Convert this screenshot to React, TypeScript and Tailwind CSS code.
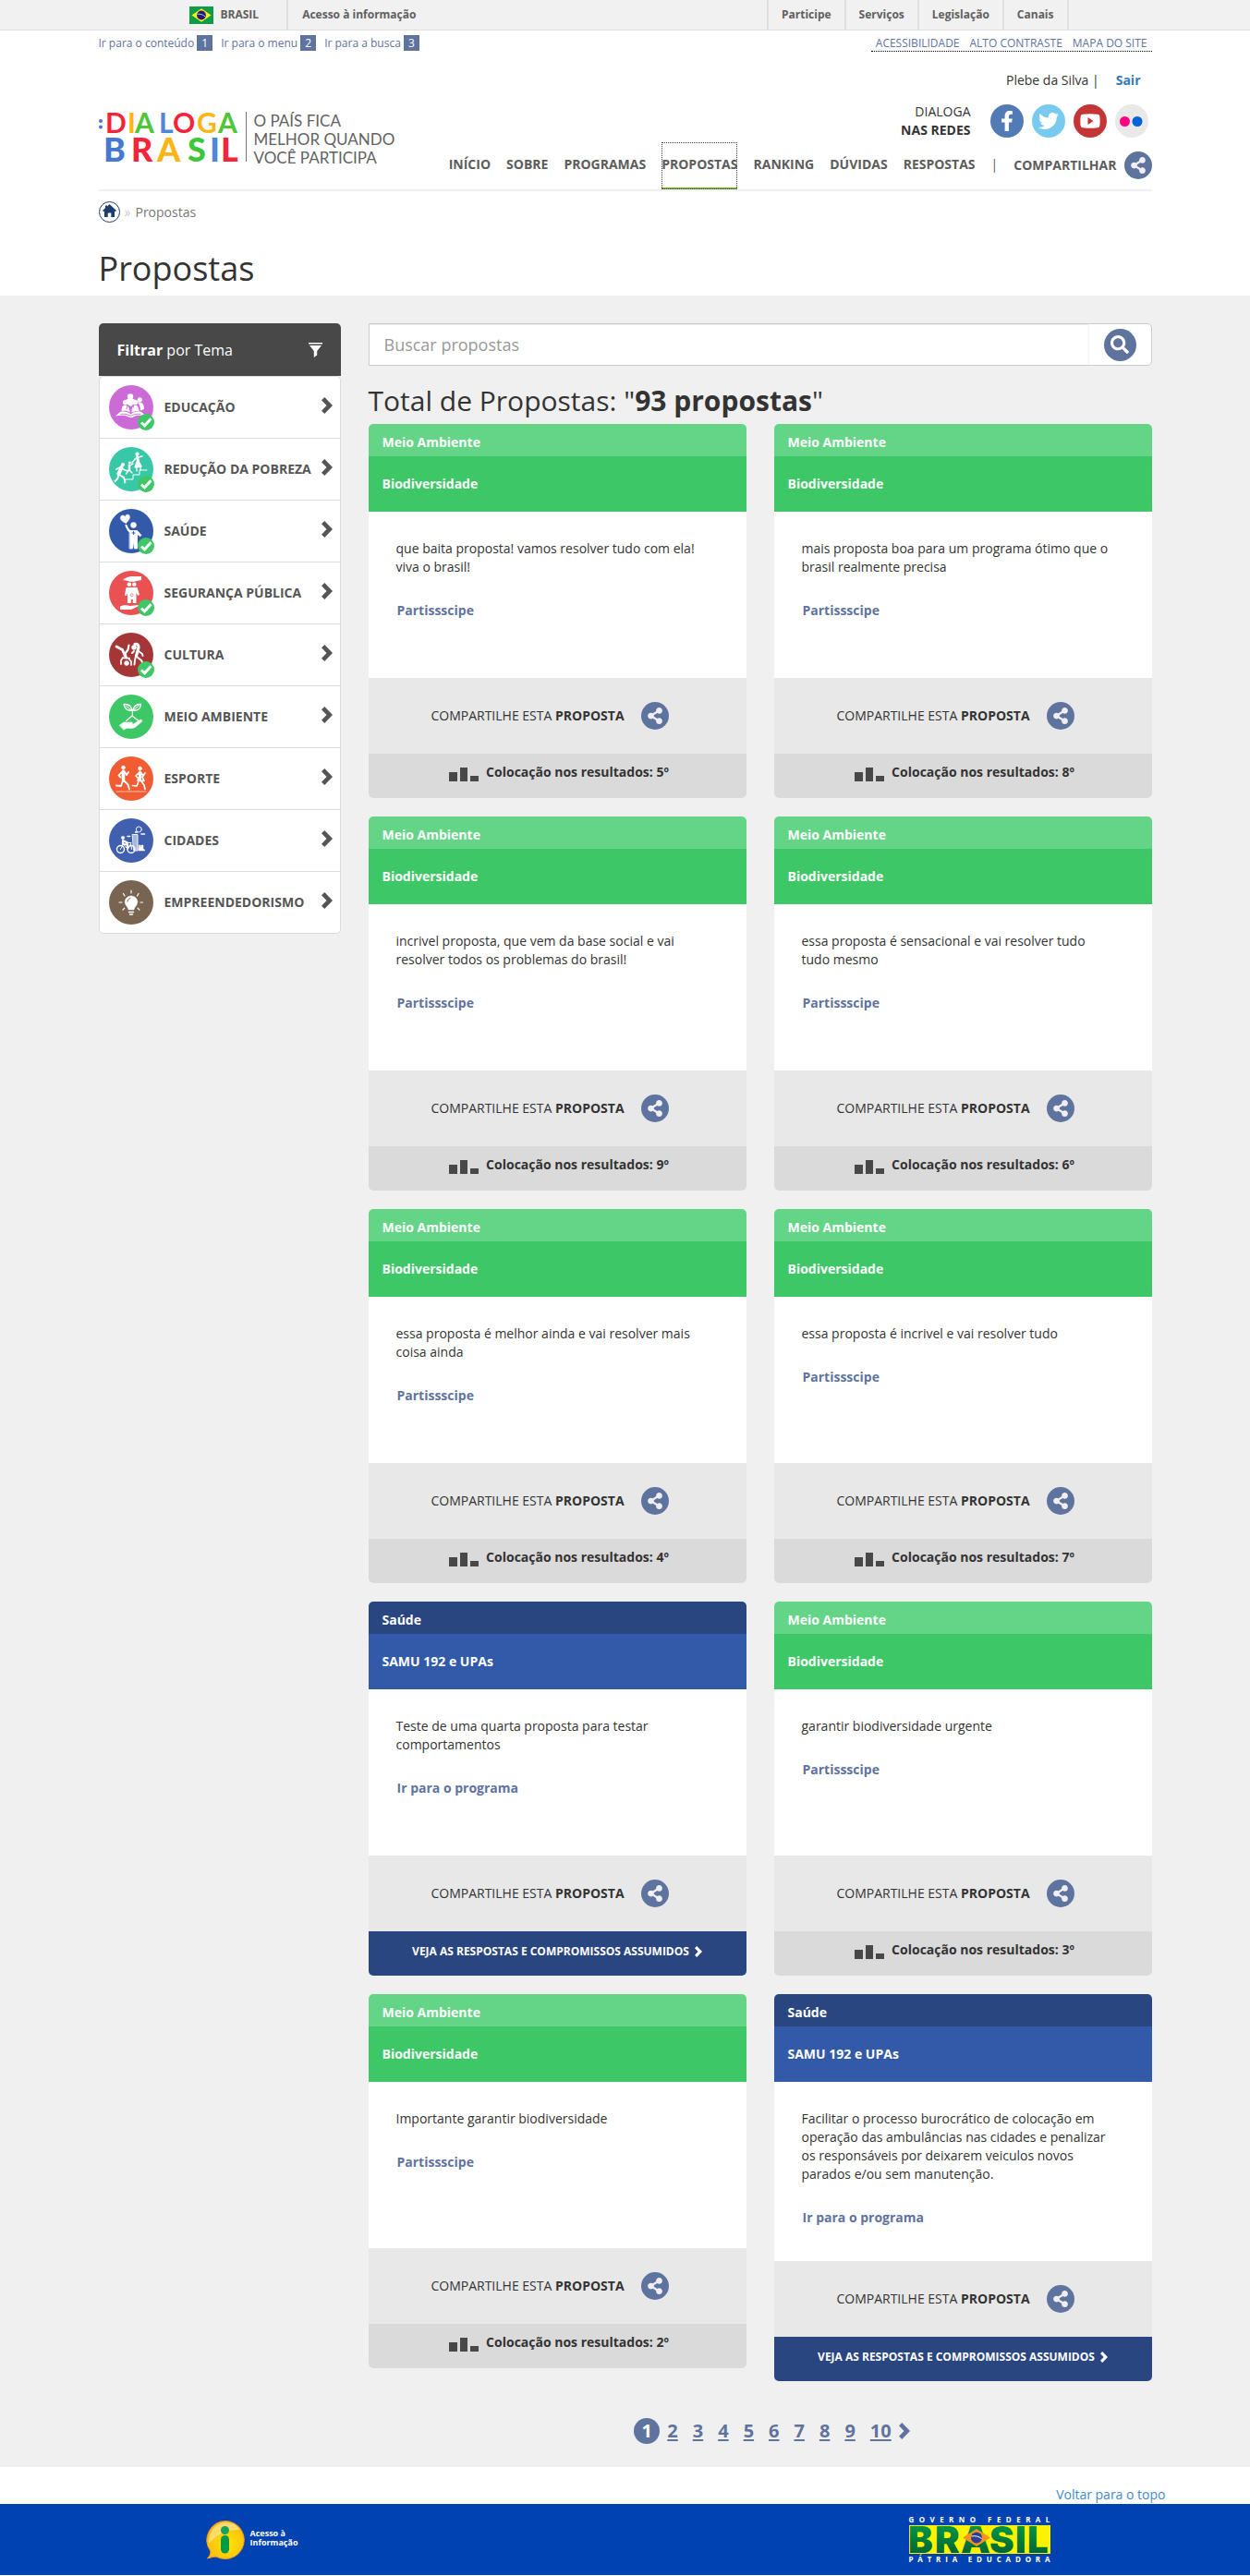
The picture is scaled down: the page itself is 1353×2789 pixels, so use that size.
import type { ReactNode } from 'react';
import { FaFacebookF, FaTwitter, FaSearch, FaShareAlt } from 'react-icons/fa';

interface Theme {
  name: string;
  color: string;
  checked?: boolean;
  art: ReactNode;
}

interface Proposal {
  theme: 'Meio Ambiente' | 'Saúde';
  text: string;
  rank?: number;
}

const proposals: Proposal[] = [
  { theme: 'Meio Ambiente', text: 'que baita proposta! vamos resolver tudo com ela! viva o brasil!', rank: 5 },
  { theme: 'Meio Ambiente', text: 'mais proposta boa para um programa ótimo que o brasil realmente precisa', rank: 8 },
  { theme: 'Meio Ambiente', text: 'incrivel proposta, que vem da base social e vai resolver todos os problemas do brasil!', rank: 9 },
  { theme: 'Meio Ambiente', text: 'essa proposta é sensacional e vai resolver tudo tudo mesmo', rank: 6 },
  { theme: 'Meio Ambiente', text: 'essa proposta é melhor ainda e vai resolver mais coisa ainda', rank: 4 },
  { theme: 'Meio Ambiente', text: 'essa proposta é incrivel e vai resolver tudo', rank: 7 },
  { theme: 'Saúde', text: 'Teste de uma quarta proposta para testar comportamentos' },
  { theme: 'Meio Ambiente', text: 'garantir biodiversidade urgente', rank: 3 },
  { theme: 'Meio Ambiente', text: 'Importante garantir biodiversidade', rank: 2 },
  {
    theme: 'Saúde',
    text: 'Facilitar o processo burocrático de colocação em operação das ambulâncias nas cidades e penalizar os responsáveis por deixarem veiculos novos parados e/ou sem manutenção.',
  },
];

const themes: Theme[] = [
  {
    name: 'EDUCAÇÃO',
    color: '#cc6bd8',
    checked: true,
    art: (
      <g fill="#fff">
        <circle cx="23" cy="12.5" r="3.2" />
        <circle cx="17.5" cy="18.5" r="2.6" />
        <circle cx="28.5" cy="18.5" r="2.6" />
        <circle cx="33.3" cy="15.8" r="2.6" />
        <path d="M17.5 16c1-1.500 10-1.500 11.500 0l-1 4-4.500 3-5-3zM13.500 28c0-4 1.500-6.500 4-6.500s4 2 4.500 5l1 3c-3-2-6-2-9.500-1.500zM24.500 29.500c0-5 1.500-8 4-8s4 3 4 7c-3-.5-5-.5-8 1zM31 18.800c4-1 7 1 7 7.200l-4 1.500c0-4-1-6.500-3-8.700z" />
        <path d="M12 29c4-1 8-.5 11.500 2.500C27 28.500 31 28 35 29l5.500 4.500c-5-1-10-1-14 .8-1 1.200-4.500 1.200-5.500 0-4-1.800-9-1.800-14-.8z" />
        <path d="M12.500 31.500c4-.6 7-.3 10.800 1.800 4-2 7-2.400 11-1.800M20.200 21.500l-1.500 5M26 21.500l.8 3" fill="none" stroke="#cc6bd8" strokeWidth=".9" />
      </g>
    ),
  },
  {
    name: 'REDUÇÃO DA POBREZA',
    color: '#38c7a7',
    checked: true,
    art: (
      <g fill="none" stroke="#fff" strokeLinecap="round" strokeLinejoin="round">
        <path d="M17 39v-4h9v-5h7v-5h8" strokeWidth="1" />
        <circle cx="15" cy="19" r="1.800" fill="#fff" strokeWidth=".5" />
        <path d="M13.500 22l-3 7" strokeWidth="4" />
        <path d="M11 30l5 3 1.500 5M10 30l-.5 4-3 3M12 22l-4 2M15 24l5 2" strokeWidth="1.800" />
        <circle cx="22.500" cy="17" r="1.300" fill="#fff" strokeWidth=".5" />
        <path d="M22 19.500v5" strokeWidth="2.500" />
        <path d="M22 25l3 3M21.500 25l-3 4M23 20l3-2" strokeWidth="1.300" />
        <circle cx="30.500" cy="7.500" r="1.800" fill="#fff" strokeWidth=".5" />
        <path d="M30.500 10.500l1 5" strokeWidth="3" />
        <path d="M30 16l-2 6 7-1-2.500-5zM29 12l-4 5M32 11l4-1M30 22v4M34 21v4" fill="#fff" strokeWidth="1.300" />
      </g>
    ),
  },
  {
    name: 'SAÚDE',
    color: '#335aa9',
    checked: true,
    art: (
      <g fill="none" stroke="#fff" strokeLinecap="round" strokeLinejoin="round">
        <path d="M18.500 15.500c-4-1.500-7-4-6-7 1-2.300 4-2 5 0 .5-2.600 3.500-3.200 4.700-1.200 1.300 2.500-1 5.500-3.700 8.200z" fill="#fff" strokeWidth=".4" />
        <circle cx="26.500" cy="17.500" r="3" fill="#fff" strokeWidth=".5" />
        <path d="M18.500 18l2.500 5 4 2.500" strokeWidth="2.200" />
        <path d="M22.500 23.500h8l4.500 5-1.500 1.200-3-2.500V43h-3l-1-8-1 8h-3z" fill="#fff" strokeWidth=".8" />
        <path d="M25 26h3M26.500 24.500v3" stroke="#335aa9" strokeWidth="1" />
      </g>
    ),
  },
  {
    name: 'SEGURANÇA PÚBLICA',
    color: '#e95153',
    checked: true,
    art: (
      <g fill="#fff">
        <path d="M15 10c2-2.500 6-3.500 9-4h11v4l-7 1.500c-4 1-7-.5-13-1.500z" />
        <circle cx="21.800" cy="14.700" r="2.300" />
        <circle cx="27.300" cy="14.700" r="2.300" />
        <path d="M18.500 18h12l2.500 8-2 .8-1.500-3V35h-3.700v-4h-2v4H20V24l-1 3-2-.8z" />
        <circle cx="24.700" cy="26.300" r="1.500" stroke="#e95153" strokeWidth=".6" />
        <path d="M12 38.500c4-2 8-1.500 11-.5l8-1c2-.3 2 1 0 1.800l-7 3.200H12z" />
      </g>
    ),
  },
  {
    name: 'CULTURA',
    color: '#a43638',
    checked: true,
    art: (
      <g fill="none" stroke="#fff" strokeLinecap="round" strokeLinejoin="round">
        <circle cx="19" cy="33" r="2.500" fill="#fff" strokeWidth=".5" />
        <path d="M8 15l6.500 3.500 3 7" strokeWidth="2.800" />
        <path d="M21.500 13.500l-1 5-3 4 1.500 5" strokeWidth="2.200" />
        <path d="M15 27l-2 3v4M21 28l3 3v4M15 27.500h7" strokeWidth="1.700" />
        <circle cx="27" cy="16" r="2.500" fill="#fff" strokeWidth=".5" />
        <path d="M28 12.500c3-.5 4 1 4 3.500l-2.500 9" strokeWidth="3.200" />
        <path d="M29 25l-1 5-.5 4.500M30 26l5 4 2 4M32 20l4 3 .5 2M27 20l-2 2" strokeWidth="1.900" />
      </g>
    ),
  },
  {
    name: 'MEIO AMBIENTE',
    color: '#3dc766',
    art: (
      <g fill="none" stroke="#fff" strokeLinecap="round" strokeLinejoin="round">
        <path d="M25 17c-1-5-4-7-9-6.500 1 5 4 7.500 9 6.500zM26 17c1-5 4-7 8.500-6.500-.5 5-3.500 7.500-8.500 6.500z" strokeWidth="1.400" />
        <path d="M18.500 12.500l6.800 5.200 6.700-5.200M25.300 18v5" strokeWidth="1" />
        <path d="M18.500 28.500l6.500-5.500 7 5.500" strokeWidth="1.200" />
        <path d="M11.500 33l4.500-3h8c2 0 2 2 0 2.200h-3 5l7.500-4.700c2-.8 3 .8 1.700 2L28 35.500c-3 1.500-6 .8-9 .8L16 38z" fill="#fff" strokeWidth=".7" />
      </g>
    ),
  },
  {
    name: 'ESPORTE',
    color: '#f15c33',
    art: (
      <g fill="none" stroke="#fff" strokeLinecap="round" strokeLinejoin="round">
        <path d="M8 38h32" strokeWidth=".6" />
        <circle cx="15.500" cy="12" r="2" fill="#fff" strokeWidth=".5" />
        <path d="M15.500 16v9" strokeWidth="3.600" />
        <path d="M14 17l-3.500 3.500 2 2M17 17l2 3 2-3M15 26l-2 6-5-.5M16 26l4.500 4.500 1.500 5" strokeWidth="1.900" />
        <circle cx="33.500" cy="13" r="2" fill="#fff" strokeWidth=".5" />
        <path d="M33.500 17v8" strokeWidth="3.200" />
        <path d="M31 26l2-4h3l2 4.500zM32 18l-3 3 2 2M35 18l2 3 2-3M32 27l-2 5-4.500-.5M35 27l3 4 1 4.500" strokeWidth="1.700" />
      </g>
    ),
  },
  {
    name: 'CIDADES',
    color: '#405fae',
    art: (
      <g fill="none" stroke="#fff" strokeLinecap="round" strokeLinejoin="round">
        <circle cx="12.500" cy="33.500" r="4" strokeWidth="1.400" />
        <circle cx="24" cy="33.500" r="4" strokeWidth="1.400" />
        <path d="M12.500 33.500l3-5.500 5 5.500 3-6 1 6M21 26.500h3" strokeWidth="1" />
        <circle cx="15" cy="21" r="1.800" fill="#fff" strokeWidth=".3" />
        <path d="M15 24v4M16 28l4 .5v4M16 24.500l4 2" strokeWidth="2.200" />
        <path d="M25.500 17.500H31V35h-4z" fill="#fff" fillOpacity=".55" strokeWidth=".9" />
        <path d="M32 35h7l-2-2.500V29h-2v3.500L34 29h-1.500z" fill="#fff" strokeWidth=".5" />
        <circle cx="32.300" cy="12" r="3" strokeWidth=".9" />
        <path d="M35 17h3.500M20 19.500h2.500M28.500 15h2" strokeWidth="1.600" />
      </g>
    ),
  },
  {
    name: 'EMPREENDEDORISMO',
    color: '#786450',
    art: (
      <g fill="none" stroke="#fff" strokeLinecap="round" strokeLinejoin="round">
        <path d="M24 17c-4 0-6.800 3-6.800 6.500 0 4 3.200 5 3.800 8.500h6c.6-3.500 3.800-4.500 3.800-8.500C30.800 20 28 17 24 17z" fill="#fff" strokeWidth=".4" />
        <path d="M20 23c0-1.800 1.200-3 3-3.500" stroke="#786450" strokeWidth="1" />
        <path d="M21.500 34.500h5M22.500 37h3" strokeWidth="1.500" />
        <path d="M24 11v3M15.500 14.500l1.500 2.500M32 14.500L30.500 17M11 24h3M34 24h2.500M15 32l1.800-1.800M32.800 32L31 30.200" strokeWidth="1.200" />
      </g>
    ),
  },
];

const navItems = ['INÍCIO', 'SOBRE', 'PROGRAMAS', 'PROPOSTAS', 'RANKING', 'DÚVIDAS', 'RESPOSTAS'];

function Chevron({ className }: { className: string }) {
  return (
    <svg className={className} viewBox="0 0 12 18" fill="currentColor" aria-hidden="true">
      <path d="M3.300 0L12 9l-8.700 9L0 14.700 5.500 9 0 3.300z" />
    </svg>
  );
}

function ShareButton({ label }: { label: string }) {
  return (
    <button aria-label={label} className="flex size-[30px] shrink-0 items-center justify-center rounded-full bg-[#5f739f] text-[#efeff3]">
      <FaShareAlt className="size-[18px]" />
    </button>
  );
}

function Flag() {
  return (
    <svg className="h-[19px] w-[26px]" viewBox="0 0 26 19" aria-hidden="true">
      <path fill="#0f9b48" d="M0 0h26v19H0z" />
      <path fill="#fff212" d="M13 2.300L23.500 9.500 13 16.700 2.500 9.500z" />
      <circle cx="13" cy="9.500" r="4.900" fill="#26167d" />
      <path d="M8.500 8.300c3.500-.5 6.500.5 9 3" fill="none" stroke="#9fd3c0" />
    </svg>
  );
}

function TopBar() {
  return (
    <div className="border-b border-[#dfdfdf] bg-[#f1f1f1] text-xs font-bold text-[#606060]">
      <div className="mx-auto flex h-8 max-w-[960px] items-stretch pl-2">
        <a href="#brasil" className="flex items-center gap-2 border-r-2 border-[#dfdfdf] pr-[30px]">
          <Flag />
          BRASIL
        </a>
        <a href="#acesso" className="flex items-center pl-[15px]">Acesso à informação</a>
        <nav className="ml-auto flex border-l-2 border-[#dfdfdf]">
          {['Participe', 'Serviços', 'Legislação', 'Canais'].map((item) => (
            <a key={item} href={`#${item}`} className="flex items-center border-r-2 border-[#dfdfdf] px-[14px]">
              {item}
            </a>
          ))}
        </nav>
      </div>
    </div>
  );
}

// Two-line wordmark, one tspan per coloured letter
function Logo() {
  const top: [string, number, string][] = [
    ['D', 7, '#f4253a'], ['I', 31, '#fbb615'], ['A', 39, '#4ec636'], ['L', 65, '#4f86d9'],
    ['O', 80, '#f4253a'], ['G', 106, '#fbb615'], ['A', 129, '#4ec636'],
  ];
  const bottom: [string, number, string][] = [
    ['B', 5, '#4678d0'], ['R', 35, '#f4253a'], ['A', 63, '#fbb615'],
    ['S', 96, '#3cc63a'], ['I', 120, '#4f86d9'], ['L', 132, '#f4253a'],
  ];
  return (
    <a href="#inicio" className="flex items-start">
      <svg className="h-[55px] w-[152px] overflow-visible" viewBox="0 0 152 55" aria-hidden="true">
        <circle cx="2" cy="10" r="2" fill="#4678d0" />
        <circle cx="2" cy="16.500" r="2" fill="#4678d0" />
        <g fontFamily="Lato, sans-serif">
          <text y="23" fontSize="30" fontWeight="700">
            {top.map(([letter, x, fill]) => (
              <tspan key={x} x={x} fill={fill}>{letter}</tspan>
            ))}
          </text>
          <text y="54" fontSize="36" fontWeight="900">
            {bottom.map(([letter, x, fill]) => (
              <tspan key={x} x={x} fill={fill}>{letter}</tspan>
            ))}
          </text>
        </g>
      </svg>
      <span className="ml-[7px] h-[54px] border-l border-[#777]" />
      <p className="pl-2 font-['Lato',sans-serif] text-[17px] leading-5 text-[#636363]">
        O PAÍS FICA
        <br />
        MELHOR QUANDO
        <br />
        VOCÊ PARTICIPA
      </p>
    </a>
  );
}

function SocialLinks() {
  const circle = 'flex size-9 items-center justify-center rounded-full text-white';
  return (
    <div className="mr-1 flex items-center gap-[9px]">
      <p className="mr-3 text-right leading-5">
        DIALOGA
        <br />
        <strong>NAS REDES</strong>
      </p>
      <a href="#facebook" aria-label="Facebook" className={`${circle} bg-[#527ab5]`}>
        <FaFacebookF className="size-[22px]" />
      </a>
      <a href="#twitter" aria-label="Twitter" className={`${circle} bg-[#78cbef]`}>
        <FaTwitter className="size-[22px]" />
      </a>
      <a href="#youtube" aria-label="YouTube" className={`${circle} bg-[#c63535]`}>
        <svg className="h-4 w-[22px]" viewBox="0 0 22 16" aria-hidden="true">
          <path fill="#fff" d="M3 .7Q11-.3 19 .7q2 .2 2.300 2 .7 5.300 0 10.500-.3 1.800-2.300 2-8 1-16 0-2-.2-2.300-2Q0 8 .7 2.700 1 .9 3 .7z" />
          <path fill="#c63535" d="M8.500 4l6 4-6 4z" />
        </svg>
      </a>
      <a href="#flickr" aria-label="Flickr" className={`${circle} bg-[#e9e9e9]`}>
        <svg className="h-[11px] w-[25px]" viewBox="0 0 25 11" aria-hidden="true">
          <circle cx="5.500" cy="5.500" r="5.500" fill="#ff0084" />
          <circle cx="19" cy="5.500" r="5.500" fill="#0063dc" />
        </svg>
      </a>
    </div>
  );
}

function Header() {
  return (
    <header>
      <div className="flex items-start justify-between pt-[5px] text-xs text-[#5f739f]">
        <ul className="flex gap-[9px] leading-[17px]">
          {['Ir para o conteúdo', 'Ir para o menu', 'Ir para a busca'].map((item, i) => (
            <li key={item}>
              <a href={`#atalho-${i + 1}`} className="flex gap-[3px]">
                {item}
                <span className="w-[17px] bg-[#5f739f] text-center text-white">{i + 1}</span>
              </a>
            </li>
          ))}
        </ul>
        <ul className="flex gap-[11px] border-b border-dotted border-black px-[5px] leading-[17px]">
          {['ACESSIBILIDADE', 'ALTO CONTRASTE', 'MAPA DO SITE'].map((item) => (
            <li key={item}>
              <a href={`#${item}`}>{item}</a>
            </li>
          ))}
        </ul>
      </div>

      <div className="flex items-end justify-between border-b-2 border-[#f0f0f0]">
        <div className="pb-6">
          <Logo />
        </div>
        <div className="flex flex-col items-end">
          <p className="mt-[21px] mr-3 flex leading-5">
            Plebe da Silva |
            <a href="#sair" className="ml-[18px] font-bold text-[#337ab7]">Sair</a>
          </p>
          <div className="mt-[14px]">
            <SocialLinks />
          </div>
          <nav className="mt-[3px] flex h-[51px] items-stretch gap-[17px] font-bold text-[#5c5c5c]">
            {navItems.map((item) => (
              <a
                key={item}
                href={`#${item}`}
                className={`flex items-center border-b-2 pb-[2px] ${
                  item === 'PROPOSTAS'
                    ? 'border-[#76b82a] outline outline-1 -outline-offset-1 outline-dotted outline-[#444]'
                    : 'border-transparent'
                }`}
              >
                {item}
              </a>
            ))}
            <span className="flex items-center pb-1 font-normal">|</span>
            <span className="flex items-center gap-2 pb-[2px]">
              COMPARTILHAR
              <ShareButton label="Compartilhar" />
            </span>
          </nav>
        </div>
      </div>

      <nav aria-label="Você está aqui" className="flex items-center gap-[5px] pt-[11px] text-[#777]">
        <a href="#inicio" aria-label="Início">
          <svg className="size-[23px]" viewBox="0 0 23 23" aria-hidden="true">
            <circle cx="11.500" cy="11.500" r="11" fill="#fff" stroke="#1d3e6b" />
            <path fill="#1d3e6b" d="M11.500 3l7.500 7-1.200 1.200-.8-.7V17h-3.700v-4.500H9.700V17H6v-6.500l-.8.7L4 10l3-2.700V4.500h2v1z" />
          </svg>
        </a>
        <span className="text-[#ccc]">»</span>
        <span>Propostas</span>
      </nav>
      <h1 className="pt-[25px] pb-[5px] text-4xl leading-[49px]">Propostas</h1>
    </header>
  );
}

function ThemeFilter() {
  return (
    <aside className="w-[262px] shrink-0">
      <h2 className="flex h-[57px] items-center justify-between rounded-t-[5px] bg-[#484848] px-[20px] text-base text-white">
        <span>
          <strong>Filtrar</strong> por Tema
        </span>
        <svg className="h-4 w-[15px]" viewBox="0 0 15 16" fill="currentColor" aria-hidden="true">
          <path d="M0 0h15v1.500H0zM1 3h13L9.200 9v4.500L5.800 16V9z" />
        </svg>
      </h2>
      <ul className="rounded-[5px] border border-[#dcdcdc] bg-white">
        {themes.map((theme) => (
          <li key={theme.name} className="border-b border-[#dcdcdc] last:border-b-0">
            <a href={`#${theme.name}`} className="flex h-[66px] items-center pr-2 pl-[10px] font-bold text-[#555]">
              <span className="relative">
                <svg className="size-12" viewBox="0 0 48 48" aria-hidden="true">
                  <circle cx="24" cy="24" r="24" fill={theme.color} />
                  {theme.art}
                </svg>
                {theme.checked && (
                  <svg className="absolute -right-px -bottom-px size-[18px]" viewBox="0 0 18 18" aria-hidden="true">
                    <circle cx="9" cy="9" r="9" fill="#3dc766" />
                    <path d="M4 9.500l3.500 3.300 7-7.500" fill="none" stroke="#fff" strokeWidth="3" />
                  </svg>
                )}
              </span>
              <span className="ml-3">{theme.name}</span>
              <Chevron className="mb-1 ml-auto h-[18px] w-3" />
            </a>
          </li>
        ))}
      </ul>
    </aside>
  );
}

function ProposalCard({ proposal }: { proposal: Proposal }) {
  const isHealth = proposal.theme === 'Saúde';

  return (
    <article className="overflow-hidden rounded-[5px] bg-white">
      <h3 className={`px-[15px] pt-[10px] pb-[5px] leading-5 font-bold text-white ${isHealth ? 'bg-[#2a4680]' : 'bg-[#64d486]'}`}>
        {proposal.theme}
      </h3>
      <h4 className={`px-[15px] py-5 leading-5 font-bold text-white ${isHealth ? 'bg-[#335aa9]' : 'bg-[#3dc766]'}`}>
        {isHealth ? 'SAMU 192 e UPAs' : 'Biodiversidade'}
      </h4>
      <div className="min-h-[180px] pt-[30px] pr-[42px] pb-[37px] pl-[30px] leading-5">
        <p>{proposal.text}</p>
        <a href="#programa" className="mt-[27px] ml-px inline-block font-bold text-[#5f739f]">
          {isHealth ? 'Ir para o programa' : 'Partissscipe'}
        </a>
      </div>
      <div className="flex h-[82px] items-center justify-center gap-[18px] bg-[#e8e8e8] pr-4">
        <p>
          COMPARTILHE ESTA <strong>PROPOSTA</strong>
        </p>
        <ShareButton label="Compartilhe esta proposta" />
      </div>
      {isHealth ? (
        <a href="#respostas" className="flex h-12 items-center justify-center gap-[6px] bg-[#2a4680] pb-1 text-xs font-bold text-white">
          VEJA AS RESPOSTAS E COMPROMISSOS ASSUMIDOS
          <Chevron className="h-3 w-2" />
        </a>
      ) : (
        <p className="flex h-12 items-center justify-center gap-2 bg-[#dadada] pb-2 pl-1 font-bold">
          <svg className="mt-1 h-[15px] w-8 text-[#484848]" viewBox="0 0 32 15" fill="currentColor" aria-hidden="true">
            <path d="M0 5h9v10H0zM12 0h8v15h-8zM23 9h9v6h-9z" />
          </svg>
          Colocação nos resultados: {proposal.rank}º
        </p>
      )}
    </article>
  );
}

function Pagination() {
  return (
    <nav aria-label="Paginação" className="mt-10 flex items-center justify-center gap-4 pl-[26px] text-xl leading-7 font-bold text-[#5f739f]">
      <span aria-current="page" className="-mr-2 size-7 rounded-full bg-[#5f739f] text-center text-white">1</span>
      {[2, 3, 4, 5, 6, 7, 8, 9, 10].map((page) => (
        <a key={page} href={`#pagina-${page}`} className="underline underline-offset-2">{page}</a>
      ))}
      <a href="#proxima" aria-label="Próxima página" className="-ml-2">
        <Chevron className="h-[18px] w-3" />
      </a>
    </nav>
  );
}

function SpacedWords({ text }: { text: string }) {
  return (
    <span aria-label={text} className="flex justify-between text-[8px] leading-2 font-bold">
      {[...text].map((letter, i) => (
        <span key={i}>{letter === ' ' ? '\u00a0' : letter}</span>
      ))}
    </span>
  );
}

function Footer() {
  return (
    <footer className="bg-[#0042b1] text-white">
      <div className="mx-auto flex h-[77px] max-w-[960px] items-center justify-between pr-5 pl-[26px]">
        <a href="#acesso" className="flex items-center gap-[6px] text-[9px] leading-[10px] font-bold">
          <svg className="size-[42px]" viewBox="0 0 42 42" aria-hidden="true">
            <defs>
              <radialGradient id="balloon" cx=".55" cy=".6" r=".6">
                <stop offset="0" stopColor="#ffe600" />
                <stop offset="1" stopColor="#fdb913" />
              </radialGradient>
            </defs>
            <path d="M21 .5a20.500 20.500 0 11-9.500 38.800C8 38.500 5 40.500 1.500 41c2.500-3 4-5.500 3-8.500A20.500 20.500 0 0121 .5z" fill="url(#balloon)" stroke="#f39c12" />
            <path d="M3 25C3 10 12 2 21 2c8 0 13 3 15.500 8C22 9 12 15 3 25z" fill="#fff" fillOpacity=".4" />
            <circle cx="20.500" cy="10.500" r="4.500" fill="#16a15c" />
            <rect x="16" y="16" width="9" height="19.500" rx="4.500" fill="#009a49" />
          </svg>
          <span className="pb-1">
            Acesso à
            <br />
            Informação
          </span>
        </a>
        <a href="#governo" className="flex w-[153px] flex-col gap-[2px]">
          <SpacedWords text="GOVERNO FEDERAL" />
          <svg className="h-[31px] w-full overflow-visible" viewBox="0 0 153 31" aria-hidden="true">
            <defs>
              <linearGradient id="leaf" x1="0" y1="0" x2="0" y2="1">
                <stop offset="0" stopColor="#00a651" />
                <stop offset="1" stopColor="#00552b" />
              </linearGradient>
            </defs>
            <path fill="#fff200" d="M0 0h153v31H0z" />
            <text y="30" fontFamily="Inter, sans-serif" fontWeight="900" fontSize="40" fill="url(#leaf)">
              <tspan x="-1">B</tspan>
              <tspan x="28">R</tspan>
              <tspan x="56">A</tspan>
              <tspan x="87">S</tspan>
              <tspan x="115">I</tspan>
              <tspan x="128">L</tspan>
            </text>
            <path fill="#f7941d" d="M58 13.500L73 4l15 9.500L73 23z" />
            <circle cx="73" cy="13.500" r="6" fill="#2e3f93" />
            <path d="M67.500 12c4-.8 8 0 11 2.500" fill="none" stroke="#fff" />
          </svg>
          <SpacedWords text="PÁTRIA EDUCADORA" />
        </a>
      </div>
    </footer>
  );
}

export default function App() {
  return (
    <div className="bg-white font-['Open_Sans',sans-serif] text-sm text-[#333]">
      <TopBar />
      <div className="mx-auto max-w-[1170px] px-[15px]">
        <Header />
      </div>

      <main className="bg-[#f0f0f0] pt-[30px] pb-[25px]">
        <div className="mx-auto flex max-w-[1170px] items-start gap-[30px] px-[15px]">
          <ThemeFilter />
          <section className="min-w-0 flex-1">
            <form className="flex h-[46px] rounded-r-[5px] border border-[#ccc] bg-white">
              <input
                type="text"
                aria-label="Buscar propostas"
                placeholder="Buscar propostas"
                className="min-w-0 flex-1 px-4 text-lg shadow-[inset_0_1px_1px_rgba(0,0,0,0.075)] outline-none placeholder:text-[#999]"
              />
              <button type="button" aria-label="Buscar" className="flex w-[68px] items-center justify-center border-l border-[#f5f5f5]">
                <span className="flex size-[35px] items-center justify-center rounded-full bg-[#5f739f] text-white">
                  <FaSearch className="size-5" />
                </span>
              </button>
            </form>

            <h2 className="mt-[17px] mb-[5px] text-3xl leading-[41px]">
              Total de Propostas: "<strong>93 propostas</strong>"
            </h2>

            <div className="grid grid-cols-2 items-start gap-x-[30px] gap-y-5">
              {proposals.map((proposal) => (
                <ProposalCard key={proposal.text} proposal={proposal} />
              ))}
            </div>

            <Pagination />
          </section>
        </div>
      </main>

      <div className="mx-auto flex max-w-[1170px] justify-end pt-[20px] leading-5">
        <a href="#topo" className="text-[#428bca]">Voltar para o topo</a>
      </div>
      <Footer />
    </div>
  );
}
